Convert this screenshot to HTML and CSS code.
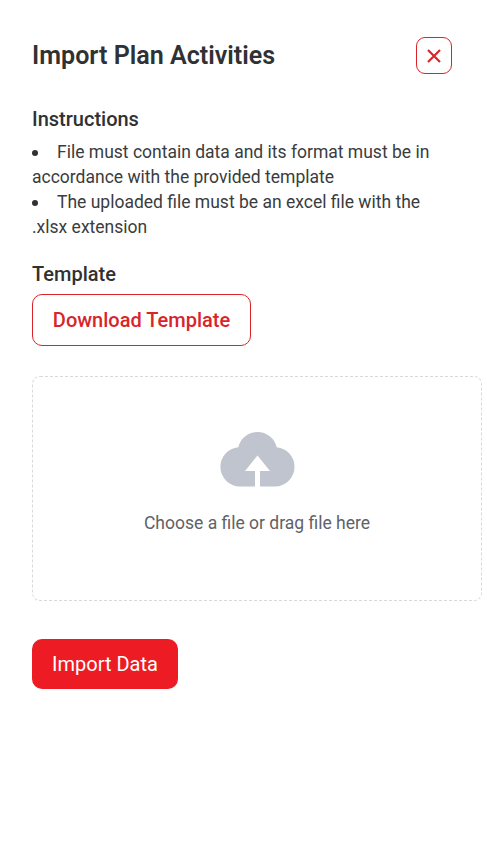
FILE: index.html
```html
<!DOCTYPE html>
<html lang="en">
<head>
<meta charset="utf-8">
<title>Import Plan Activities</title>
<link rel="stylesheet" href="styles.css">
</head>
<body>
<main class="panel">
  <header class="head">
    <h1>Import Plan Activities</h1>
    <button class="close" aria-label="Close"><svg width="14" height="14" viewBox="0 0 14 14"><path d="M1 1l12 12M13 1l-12 12"/></svg></button>
  </header>
  <h2>Instructions</h2>
  <ul class="rules">
    <li><span>File must contain data and its format must be in accordance with the provided template</span></li>
    <li><span>The uploaded file must be an excel file with the .xlsx extension</span></li>
  </ul>
  <h2>Template</h2>
  <button class="download">Download Template</button>
  <section class="drop">
    <svg class="cloud" width="75" height="56" viewBox="0 0 75 56"><path d="M20 55.500A19.700 19.700 0 0 1 .4 35.800A19.700 19.700 0 0 1 18.300 16.200A19.700 19.700 0 0 1 56.700 16.200A19.700 19.700 0 0 1 74.500 35.800A19.700 19.700 0 0 1 55 55.500H40V40H50L37.500 24.500L25 40H35V55.500Z"/></svg>
    <p>Choose a file or drag file here</p>
  </section>
  <button class="import">Import Data</button>
</main>
</body>
</html>
```
FILE: styles.css
```css
* { box-sizing: border-box; }
body { margin: 0; background: #fff; color: #2f3133; font-family: Roboto, sans-serif; }
button { font-family: inherit; padding: 0; display: block; }
.panel { padding: 37px 5px 0 32px; width: 487px; }
.head { display: flex; justify-content: space-between; align-items: center; width: 420px; height: 37px; margin-bottom: 33px; }
h1 { margin: 0; padding-top: 1px; font-size: 25.100px; line-height: 30px; font-weight: 600; }
.close { width: 36px; height: 37px; border: 1px solid #d9252a; border-radius: 9px; background: #fff; display: flex; align-items: center; justify-content: center; }
.close path { fill: none; stroke: #d9252a; stroke-width: 2.200; }
h2 { margin: 0; font-size: 20px; line-height: 24px; font-weight: 500; }
.rules { margin: 8px 0 23px; padding: 0; width: 420px; font-size: 18px; line-height: 25px; list-style-position: inside; }
.rules span { font-size: 17.500px; line-height: 20px; color: #3a3c3e; }
.download { width: 219px; height: 52px; margin-top: 8px; border: 1px solid #d9252a; border-radius: 10px; background: #fff; color: #d9252a; font-size: 20px; font-weight: 500; }
.drop { width: 450px; height: 225px; margin: 30px 0 38px; border: 1px dashed #d9d9d9; border-radius: 8px; padding-top: 54px; display: flex; flex-direction: column; align-items: center; }
.cloud { fill: #c0c4ce; }
.drop p { margin: 26px 0 0; font-size: 17.500px; line-height: 21px; color: #606266; }
.import { width: 146px; height: 50px; border: 0; border-radius: 10px; background: #ed1c24; color: #fff; font-size: 20px; font-weight: 400; }
```
